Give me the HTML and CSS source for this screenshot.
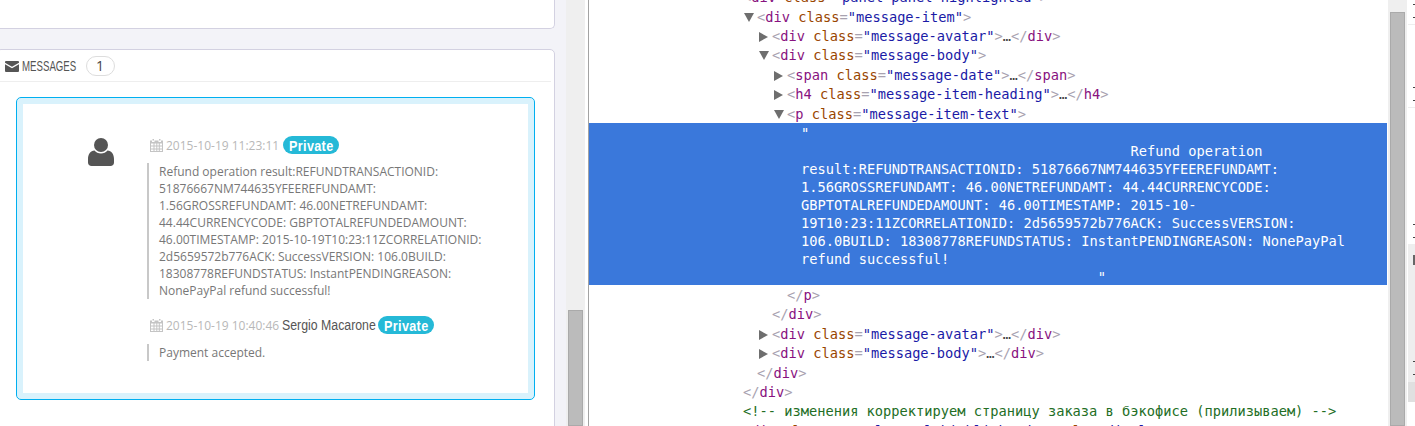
FILE: index.html
```html
<!DOCTYPE html>
<html lang="en">
<head>
<meta charset="utf-8">
<title>Messages</title>
<link rel="stylesheet" href="styles.css">
</head>
<body>
<div class="screen">
  <main class="admin">
    <section class="panel panel-top"></section>
    <section class="panel panel-messages">
      <header class="panel-heading">
        <svg class="icon-mail" viewBox="0 0 14 11"><path d="M1 0h12a1 1 0 0 1 1 1v.8L7 5.800 0 1.800V1a1 1 0 0 1 1-1z"/><path d="M0 3.200l7 4 7-4V10a1 1 0 0 1-1 1H1a1 1 0 0 1-1-1z"/></svg>
        <span class="heading-title">MESSAGES</span>
        <span class="badge">1</span>
      </header>
      <div class="highlight">
        <div class="thread">
          <div class="avatar">
            <svg viewBox="0 0 26 28"><circle cx="13" cy="7" r="7"/><path d="M6.500 12.500C8 14.500 10.300 15.500 13 15.500s5-1 6.500-3C23.500 13 26 16 26 21v3.500c0 2-1.500 3.500-3.500 3.500h-19C1.500 28 0 26.500 0 24.500V21c0-5 2.500-8 6.500-8.500z"/></svg>
          </div>
          <div class="bodies">
            <article class="message first">
              <div class="message-head">
                <svg class="icon-cal" viewBox="0 0 13 13"><path d="M2.500 0h1.500v1.500H2.500zM9 0h1.500v1.500H9zM0 1.500h2v1.500h2.500V1.500h4V3H11V1.500h2V13H0zM1 4.500v2h2.500v-2zm3.500 0v2h1.800v-2zm2.800 0v2h1.500v-2zm2.500 0v2H12v-2zM1 7.500v2h2.500v-2zm3.500 0v2h1.800v-2zm2.800 0v2h1.500v-2zm2.500 0v2H12v-2zM1 10.500V12h2.500v-1.500zm3.500 0V12h1.800v-1.500zm2.800 0V12h1.500v-1.500zm2.500 0V12H12v-1.500z"/></svg>
                <span class="date">2015-10-19 11:23:11</span>
                <span class="label"><span class="label-text">Private</span></span>
              </div>
              <p class="message-text">Refund operation result:REFUNDTRANSACTIONID: 51876667NM744635YFEEREFUNDAMT: 1.56GROSSREFUNDAMT: 46.00NETREFUNDAMT: 44.44CURRENCYCODE: GBPTOTALREFUNDEDAMOUNT: 46.00TIMESTAMP: 2015-10-19T10:23:11ZCORRELATIONID: 2d5659572b776ACK: SuccessVERSION: 106.0BUILD: 18308778REFUNDSTATUS: InstantPENDINGREASON: NonePayPal refund successful!</p>
            </article>
            <article class="message">
              <div class="message-head">
                <svg class="icon-cal" viewBox="0 0 13 13"><path d="M2.500 0h1.500v1.500H2.500zM9 0h1.500v1.500H9zM0 1.500h2v1.500h2.500V1.500h4V3H11V1.500h2V13H0zM1 4.500v2h2.500v-2zm3.500 0v2h1.800v-2zm2.800 0v2h1.500v-2zm2.500 0v2H12v-2zM1 7.500v2h2.500v-2zm3.500 0v2h1.800v-2zm2.800 0v2h1.500v-2zm2.500 0v2H12v-2zM1 10.500V12h2.500v-1.500zm3.500 0V12h1.800v-1.500zm2.800 0V12h1.500v-1.500zm2.500 0V12H12v-1.500z"/></svg>
                <span class="date">2015-10-19 10:40:46</span>
                <span class="author">Sergio Macarone</span>
                <span class="label"><span class="label-text">Private</span></span>
              </div>
              <p class="message-text">Payment accepted.</p>
            </article>
          </div>
        </div>
      </div>
    </section>
  </main>
  <div class="scroll scroll-left"><div class="thumb"></div></div>
  <div class="devtools">
    <div class="tree">
      <div class="row d0 clip-top"><span class="b">&lt;</span><span class="t">div</span> <span class="a">class</span><span class="b">=</span><span class="v">"panel panel-highlighted"</span><span class="b">&gt;</span></div>
      <div class="row d1"><i class="tri down"></i><span class="b">&lt;</span><span class="t">div</span> <span class="a">class</span><span class="b">=</span><span class="v">"message-item"</span><span class="b">&gt;</span></div>
      <div class="row d2"><i class="tri right"></i><span class="b">&lt;</span><span class="t">div</span> <span class="a">class</span><span class="b">=</span><span class="v">"message-avatar"</span><span class="b">&gt;</span>…<span class="b">&lt;/</span><span class="t">div</span><span class="b">&gt;</span></div>
      <div class="row d2"><i class="tri down"></i><span class="b">&lt;</span><span class="t">div</span> <span class="a">class</span><span class="b">=</span><span class="v">"message-body"</span><span class="b">&gt;</span></div>
      <div class="row d3"><i class="tri right"></i><span class="b">&lt;</span><span class="t">span</span> <span class="a">class</span><span class="b">=</span><span class="v">"message-date"</span><span class="b">&gt;</span>…<span class="b">&lt;/</span><span class="t">span</span><span class="b">&gt;</span></div>
      <div class="row d3"><i class="tri right"></i><span class="b">&lt;</span><span class="t">h4</span> <span class="a">class</span><span class="b">=</span><span class="v">"message-item-heading"</span><span class="b">&gt;</span>…<span class="b">&lt;/</span><span class="t">h4</span><span class="b">&gt;</span></div>
      <div class="row d3"><i class="tri down"></i><span class="b">&lt;</span><span class="t">p</span> <span class="a">class</span><span class="b">=</span><span class="v">"message-item-text"</span><span class="b">&gt;</span></div>
      <pre class="selected">"
                                        Refund operation
result:REFUNDTRANSACTIONID: 51876667NM744635YFEEREFUNDAMT:
1.56GROSSREFUNDAMT: 46.00NETREFUNDAMT: 44.44CURRENCYCODE:
GBPTOTALREFUNDEDAMOUNT: 46.00TIMESTAMP: 2015-10-
19T10:23:11ZCORRELATIONID: 2d5659572b776ACK: SuccessVERSION:
106.0BUILD: 18308778REFUNDSTATUS: InstantPENDINGREASON: NonePayPal
refund successful!
                                    "</pre>
      <div class="row d3 leaf"><span class="b">&lt;/</span><span class="t">p</span><span class="b">&gt;</span></div>
      <div class="row d2 leaf"><span class="b">&lt;/</span><span class="t">div</span><span class="b">&gt;</span></div>
      <div class="row d2"><i class="tri right"></i><span class="b">&lt;</span><span class="t">div</span> <span class="a">class</span><span class="b">=</span><span class="v">"message-avatar"</span><span class="b">&gt;</span>…<span class="b">&lt;/</span><span class="t">div</span><span class="b">&gt;</span></div>
      <div class="row d2"><i class="tri right"></i><span class="b">&lt;</span><span class="t">div</span> <span class="a">class</span><span class="b">=</span><span class="v">"message-body"</span><span class="b">&gt;</span>…<span class="b">&lt;/</span><span class="t">div</span><span class="b">&gt;</span></div>
      <div class="row d1 leaf"><span class="b">&lt;/</span><span class="t">div</span><span class="b">&gt;</span></div>
      <div class="row d0 leaf"><span class="b">&lt;/</span><span class="t">div</span><span class="b">&gt;</span></div>
      <div class="row d0 leaf"><span class="c">&lt;!-- изменения корректируем страницу заказа в бэкофисе (прилизываем) --&gt;</span></div>
      <div class="row d0 leaf"><span class="b">&lt;</span><span class="t">div</span> <span class="a">class</span><span class="b">=</span><span class="v">"panel panel-highlighted"</span> <span class="a">style</span><span class="b">=</span><span class="v">"display: none"</span><span class="b">&gt;</span></div>
    </div>
    <div class="scroll scroll-right"><div class="thumb"></div></div>
    <aside class="edge"></aside>
  </div>
</div>
</body>
</html>
```

FILE: styles.css
```css
* { box-sizing: border-box; }
html, body { margin: 0; padding: 0; height: 100%; overflow: hidden; background: #fff; }
.screen { display: flex; width: 1415px; height: 426px; overflow: hidden; }

/* left: admin page */
.admin { width: 566px; flex: none; background: #f3f3f8; padding: 0 11px 0 0; font-family: "Open Sans", sans-serif; color: #666; overflow: hidden; }
.panel { background: #fff; border: 1px solid #d3d1e1; margin-left: -4px; border-radius: 5px; }
.panel-top { height: 29px; border-top: 0; border-radius: 0 0 5px 5px; margin-bottom: 20px; }
.panel-messages { height: 400px; padding: 0 3px 0 0; }
.panel-heading { display: flex; align-items: center; height: 32px; padding-left: 8px; border-bottom: 1px solid #eee; }
.icon-mail { width: 14px; height: 11px; fill: #555; margin-right: 3px; margin-top: 1px; flex: none; }
.heading-title { display: inline-block; font-family: "Liberation Sans", sans-serif; font-size: 14px; color: #555; transform: scaleX(.69); transform-origin: 0 50%; margin-right: -24px; }
.badge { display: flex; align-items: center; justify-content: center; width: 29px; height: 20px; margin-left: 9px; border: 1px solid #ddd; border-radius: 10px; font-size: 14px; color: #444; }
.highlight { margin: 15px 16px 0 19px; height: 303px; border: 1px solid #00aff0; border-radius: 5px; background: #fff; box-shadow: inset 0 0 0 6px #d9f2fc; padding: 6px; }
.thread { display: flex; padding-top: 31px; }
.avatar { width: 124px; flex: none; padding-left: 65px; padding-top: 3px; }
.avatar svg { display: block; width: 26px; height: 28px; fill: #555; }
.bodies { flex: 1; min-width: 0; }
.message { display: flex; flex-direction: column; }
.message + .message { margin-top: 16px; }
.message + .message .message-text { margin-top: 9px; }
.message-head { display: flex; align-items: center; height: 20px; gap: 3px; padding-left: 3px; white-space: nowrap; }
.icon-cal { width: 13px; height: 13px; fill: #c4c4c4; flex: none; }
.date { font-size: 12px; color: #b8b8b8; }
.author { display: inline-block; width: 92px; font-family: "Liberation Sans", sans-serif; font-size: 14px; color: #555; transform: scaleX(.88); transform-origin: 0 50%; }
.label { display: inline-block; width: 56px; height: 18px; margin-left: 1px; line-height: 18px; padding-left: 6px; border-radius: 9px; background: #25b9d7; color: #fff; overflow: hidden; }
.label-text { display: inline-block; font-family: "Liberation Sans", sans-serif; font-weight: bold; font-size: 14px; letter-spacing: .4px; transform: scaleX(.9); transform-origin: 0 50%; }
.message-text { margin: 8px 0 0 0; width: 340px; padding-left: 10px; border-left: 2px solid #c8c8c8; font-size: 12px; line-height: 17px; color: #777; }

/* scrollbars */
.scroll { flex: none; background: #efefef; height: 426px; }
.scroll-left { width: 19px; padding: 310px 2px 0 2px; }
.thumb { background: #bbb; border: 1px solid #aaa; height: 100%; }
.scroll-right { width: 19px; margin-left: 1px; padding: 12px 2px 0 2px; }

/* devtools */
.devtools { flex: 1; min-width: 0; display: flex; border-left: 3px solid #fff; }
.devtools::before { content: ""; width: 1px; flex: none; background: #a3a3a3; }
.tree { width: 798px; flex: none; overflow: hidden; font-family: "DejaVu Sans Mono", "Liberation Mono", monospace; font-size: 13.700px; color: #444; }
.row { height: 19.4px; padding-top: 3px; line-height: 14.4px; white-space: pre; }
.clip-top { margin-top: -12.800px; }
.d0, .d0.leaf { padding-left: 154px; }
.d1 { padding-left: 155px; }
.d2 { padding-left: 170px; }
.d3 { padding-left: 185px; }
.d1.leaf { padding-left: 168px; }
.d2.leaf { padding-left: 183px; }
.d3.leaf { padding-left: 198px; }
.tri { display: inline-block; width: 13px; height: 10px; position: relative; vertical-align: -1px; }
.tri::before { content: ""; position: absolute; left: 0; top: 0; border-style: solid; border-color: transparent; }
.tri.right::before { border-width: 5px 0 5px 9px; border-left-color: #6e6e6e; }
.tri.down::before { border-width: 9px 5px 0 5px; border-top-color: #6e6e6e; }
.b { color: #a8a2b0; }
.t { color: #881280; }
.a { color: #994500; }
.v { color: #1a1aa6; }
.c { color: #236e25; }
.selected { margin: 0; height: 162px; padding: 1px 0 0 212px; background: #3a78db; color: #fff; font: inherit; line-height: 18px; white-space: pre; overflow: hidden; }

/* right edge: clipped neighbouring pane */
.edge {
  width: 8px; flex: none;
  background-repeat: no-repeat;
  background-image:
    linear-gradient(#444, #444), linear-gradient(#444, #444),
    linear-gradient(#444, #444), linear-gradient(#444, #444),
    linear-gradient(#444, #444), linear-gradient(#444, #444),
    linear-gradient(#444, #444), linear-gradient(#444, #444),
    linear-gradient(#666, #666),
    linear-gradient(#eee, #eee), linear-gradient(#eee, #eee),
    linear-gradient(#e0e0e0, #e0e0e0),
    linear-gradient(#eee, #eee);
  background-size:
    2px 1px, 2px 1px, 2px 1px, 2px 1px, 2px 1px, 2px 1px, 2px 1px, 2px 1px,
    2px 10px,
    7px 1px, 7px 1px,
    7px 20px,
    7px 158px;
  background-position:
    6px 4px, 6px 17px, 6px 87px, 6px 100px, 6px 224px, 6px 237px, 6px 361px, 6px 374px,
    6px 255px,
    1px 24px, 1px 107px,
    1px 382px,
    1px 244px;
}
```
